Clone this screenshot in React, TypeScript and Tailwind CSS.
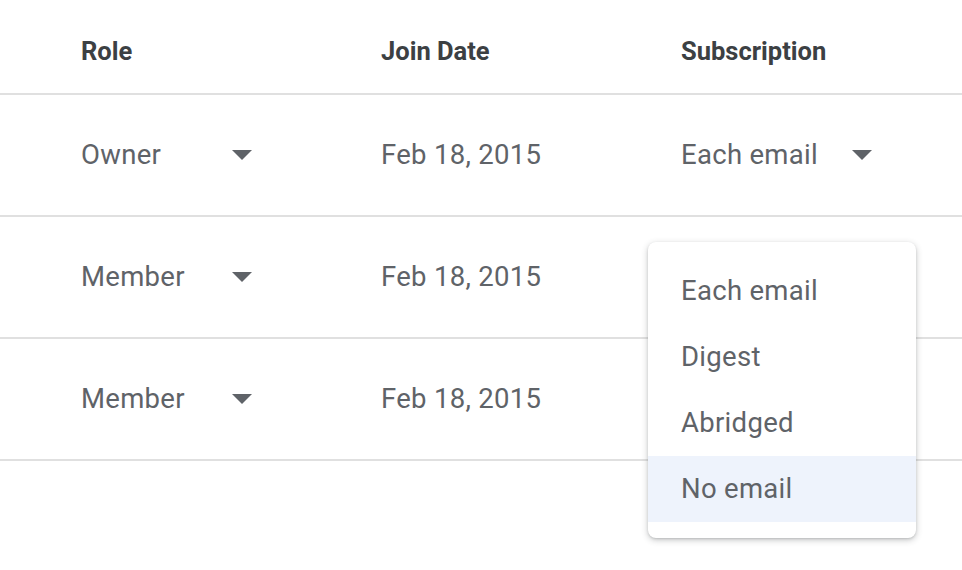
import React from "react";

const rows = [
  { role: "Owner", date: "Feb 18, 2015", sub: "Each email" },
  { role: "Member", date: "Feb 18, 2015", sub: "" },
  { role: "Member", date: "Feb 18, 2015", sub: "" },
];

const options = ["Each email", "Digest", "Abridged", "No email"];

function Caret() {
  return (
    <svg width="20" height="10" viewBox="0 0 20 10" className="shrink-0">
      <path d="M0 0 L20 0 L10 10 Z" fill="#5f6368" />
    </svg>
  );
}

function SelectCell({ value, width }: { value: string; width: string }) {
  return (
    <div className={`flex items-center justify-between ${width}`}>
      <span>{value}</span>
      <Caret />
    </div>
  );
}

export default function App() {
  return (
    <div
      className="relative h-[570px] w-[962px] overflow-hidden bg-white"
      style={{ fontFamily: "Roboto, 'Liberation Sans', sans-serif" }}
    >
      {/* header */}
      <div className="grid h-[93px] grid-cols-[300px_300px_300px] items-center pt-[10px] pl-[81px] text-[25.5px] font-bold text-[#3c4043]">
        <div>Role</div>
        <div>Join Date</div>
        <div>Subscription</div>
      </div>
      <div className="h-[2px] bg-[#e0e0e0]" />

      {rows.map((r, i) => (
        <div key={i}>
          <div className="grid h-[120px] grid-cols-[300px_300px_300px] items-center pl-[81px] text-[27.5px] tracking-[0.3px] text-[#5f6368]">
            <SelectCell value={r.role} width="w-[171px]" />
            <div>{r.date}</div>
            {r.sub ? <SelectCell value={r.sub} width="w-[191px]" /> : <div />}
          </div>
          <div className="h-[2px] bg-[#e0e0e0]" />
        </div>
      ))}

      {/* open subscription menu */}
      <div className="absolute left-[648px] top-[242px] w-[268px] rounded-[8px] bg-white py-[16px] shadow-[0_2px_6px_rgba(60,64,67,0.3),0_1px_2px_rgba(60,64,67,0.15)]">
        {options.map((o) => (
          <div
            key={o}
            className={`flex h-[66px] items-center pl-[33px] text-[27.5px] tracking-[0.3px] text-[#5f6368] ${
              o === "No email" ? "bg-[#eef3fc]" : ""
            }`}
          >
            {o}
          </div>
        ))}
      </div>
    </div>
  );
}
